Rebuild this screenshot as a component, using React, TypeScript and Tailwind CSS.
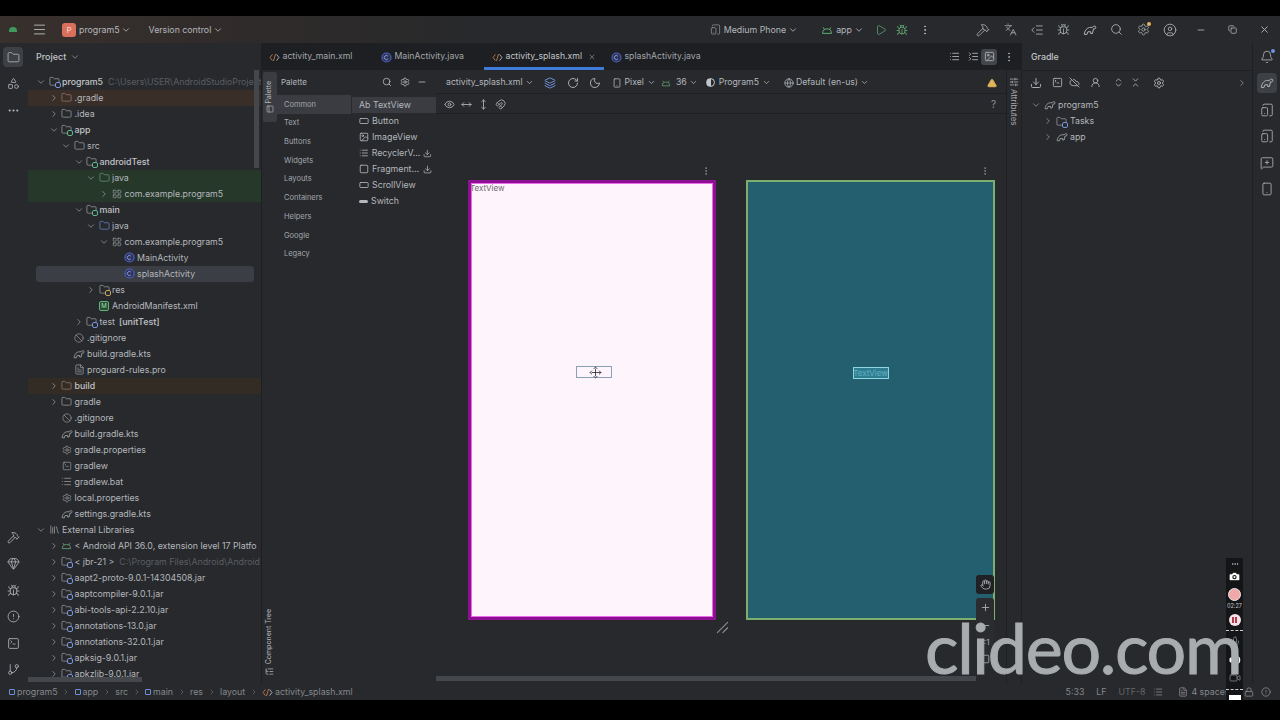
import * as React from "react";
import {
  Ban,
  Bell,
  Bug,
  Camera,
  ChevronDown,
  ChevronRight,
  ChevronsDownUp,
  ChevronsUpDown,
  CircleAlert,
  CircleUser,
  CloudOff,
  Copy,
  Download,
  Ellipsis,
  EllipsisVertical,
  Eye,
  FileText,
  Folder,
  Gem,
  GitBranch,
  Globe,
  Hammer,
  Hand,
  Image,
  Languages,
  Layers,
  LayoutGrid,
  Library,
  List,
  ListCollapse,
  ListIndentDecrease,
  ListTree,
  Lock,
  Magnet,
  Menu,
  MessageSquarePlus,
  Mic,
  Minus,
  Moon,
  Move,
  MoveHorizontal,
  MoveVertical,
  PanelLeft,
  Play,
  Plus,
  RectangleHorizontal,
  RotateCw,
  Search,
  Settings,
  SlidersHorizontal,
  Smartphone,
  Shapes,
  Square,
  SquareTerminal,
  TabletSmartphone,
  TriangleAlert,
  UserRound,
  Video,
  Volume2,
  X,
} from "lucide-react";

type IconProps = { className?: string };

function GradleIcon({ className }: IconProps) {
  return (
    <svg viewBox="0 0 16 16" fill="none" stroke="currentColor" strokeWidth="1.1" className={className}>
      <path d="M1.5 13 C2 8 5 5 9 5 L11 5 C12 3 15 3 14.6 5.4 C14.3 7 12.6 7 12 6.6 L10.8 12 L8.8 12 L8.8 10 L5.6 10 L4.6 13 Z" />
    </svg>
  );
}

function AndroidIcon({ className }: IconProps) {
  return (
    <svg viewBox="0 0 16 16" fill="none" stroke="currentColor" strokeWidth="1.3" className={className}>
      <path d="M2 12.5 C2 8.5 4.5 6.5 8 6.5 C11.5 6.5 14 8.5 14 12.5 Z" />
      <path d="M4.5 7.5 L3 4.5 M11.5 7.5 L13 4.5" />
    </svg>
  );
}

function ClassIcon({ className }: IconProps) {
  return (
    <svg viewBox="0 0 16 16" fill="none" className={className}>
      <circle cx="8" cy="8" r="6.6" stroke="#4f63c4" strokeWidth="1.6" fill="#2d3357" />
      <path d="M10.2 6.2 A3 3 0 1 0 10.2 9.8" stroke="#9aa6e6" strokeWidth="1.3" />
    </svg>
  );
}

function CodeIcon() {
  return (
    <svg viewBox="0 0 16 16" fill="none" strokeWidth="1.4" className="size-[11px]">
      <path d="M5 3.5 L1.5 8 L5 12.5" stroke="#b5764c" />
      <path d="M9.5 3 L6.5 13" stroke="#b5764c" />
      <path d="M11 3.5 L14.5 8 L11 12.5" stroke="#a9acb0" />
    </svg>
  );
}

function ModuleFolder({ badge }: { badge: string }) {
  return (
    <span className="relative block size-[11px]">
      <Folder className="size-[11px] text-[#a4a7ac]" strokeWidth={1.5} />
      <span className={`absolute -right-px -bottom-px size-[6px] rounded-[2px] border ${badge} bg-[#27292c]`} />
    </span>
  );
}

type TreeItem = {
  d: number;
  name: string;
  chev?: "open" | "closed";
  icon?: React.ReactNode;
  bold?: boolean;
  hl?: string;
  sel?: boolean;
  dim?: string;
  extra?: string;
};

const plainFolder = <Folder className="size-[11px] text-[#a4a7ac]" strokeWidth={1.5} />;
const brownFolder = <Folder className="size-[11px] text-[#a37f70]" strokeWidth={1.5} />;
const greenFolder = <Folder className="size-[11px] text-[#6f9c7f]" strokeWidth={1.5} />;
const blueFolder = <Folder className="size-[11px] text-[#6f8fd8]" strokeWidth={1.5} />;
const pkg = <LayoutGrid className="size-[10px] text-[#a4a7ac]" strokeWidth={1.5} />;
const ignoreIcon = <Ban className="size-[10px] text-[#a4a7ac]" strokeWidth={1.5} />;
const gradleFile = <GradleIcon className="size-[12px] text-[#a4a7ac]" />;
const settingsFile = <Settings className="size-[10px] text-[#a4a7ac]" strokeWidth={1.5} />;
const textFile = <List className="size-[11px] text-[#a4a7ac]" strokeWidth={1.5} />;
const jar = <ModuleFolder badge="border-[#7c93d8]" />;

const tree: TreeItem[] = [
  { d: 0, name: "program5", chev: "open", icon: <ModuleFolder badge="border-[#7c93d8]" />, bold: true, dim: "C:\\Users\\USER\\AndroidStudioProject" },
  { d: 1, name: ".gradle", chev: "closed", icon: brownFolder, hl: "bg-[#3a2f28]" },
  { d: 1, name: ".idea", chev: "closed", icon: plainFolder },
  { d: 1, name: "app", chev: "open", icon: <ModuleFolder badge="border-[#5fb88a]" />, bold: true },
  { d: 2, name: "src", chev: "open", icon: plainFolder },
  { d: 3, name: "androidTest", chev: "open", icon: <ModuleFolder badge="border-[#5fb88a]" />, bold: true },
  { d: 4, name: "java", chev: "open", icon: greenFolder, hl: "bg-[#25382a]" },
  { d: 5, name: "com.example.program5", chev: "closed", icon: pkg, hl: "bg-[#25382a]" },
  { d: 3, name: "main", chev: "open", icon: <ModuleFolder badge="border-[#5fb88a]" />, bold: true },
  { d: 4, name: "java", chev: "open", icon: blueFolder },
  { d: 5, name: "com.example.program5", chev: "open", icon: pkg },
  { d: 6, name: "MainActivity", icon: <ClassIcon className="size-[11px]" /> },
  { d: 6, name: "splashActivity", icon: <ClassIcon className="size-[11px]" />, sel: true },
  { d: 4, name: "res", chev: "closed", icon: <ModuleFolder badge="border-[#c9a45c]" /> },
  { d: 4, name: "AndroidManifest.xml", icon: <span className="flex size-[10px] items-center justify-center rounded-[2px] border border-[#62b47a] bg-[#2c4a35] text-[6px] leading-none text-[#9be0ae]">M</span> },
  { d: 3, name: "test", chev: "closed", icon: <ModuleFolder badge="border-[#7c93d8]" />, extra: "[unitTest]" },
  { d: 2, name: ".gitignore", icon: ignoreIcon },
  { d: 2, name: "build.gradle.kts", icon: gradleFile },
  { d: 2, name: "proguard-rules.pro", icon: <FileText className="size-[11px] text-[#a4a7ac]" strokeWidth={1.5} /> },
  { d: 1, name: "build", chev: "closed", icon: brownFolder, hl: "bg-[#332c24]", bold: true },
  { d: 1, name: "gradle", chev: "closed", icon: plainFolder },
  { d: 1, name: ".gitignore", icon: ignoreIcon },
  { d: 1, name: "build.gradle.kts", icon: gradleFile },
  { d: 1, name: "gradle.properties", icon: settingsFile },
  { d: 1, name: "gradlew", icon: <SquareTerminal className="size-[10px] text-[#a4a7ac]" strokeWidth={1.5} /> },
  { d: 1, name: "gradlew.bat", icon: textFile },
  { d: 1, name: "local.properties", icon: settingsFile },
  { d: 1, name: "settings.gradle.kts", icon: gradleFile },
  { d: 0, name: "External Libraries", chev: "open", icon: <Library className="size-[11px] text-[#a4a7ac]" strokeWidth={1.5} /> },
  { d: 1, name: "< Android API 36.0, extension level 17 Platfo", chev: "closed", icon: <AndroidIcon className="size-[11px] text-[#5f9c72]" /> },
  { d: 1, name: "< jbr-21 >", chev: "closed", icon: jar, dim: "C:\\Program Files\\Android\\Android" },
  { d: 1, name: "aapt2-proto-9.0.1-14304508.jar", chev: "closed", icon: jar },
  { d: 1, name: "aaptcompiler-9.0.1.jar", chev: "closed", icon: jar },
  { d: 1, name: "abi-tools-api-2.2.10.jar", chev: "closed", icon: jar },
  { d: 1, name: "annotations-13.0.jar", chev: "closed", icon: jar },
  { d: 1, name: "annotations-32.0.1.jar", chev: "closed", icon: jar },
  { d: 1, name: "apksig-9.0.1.jar", chev: "closed", icon: jar },
  { d: 1, name: "apkzlib-9.0.1.jar", chev: "closed", icon: jar },
];

function TreeRow({ item }: { item: TreeItem }) {
  const left = (item.sel ? 0 : 8) + 12.5 * item.d;
  return (
    <div
      className={`flex h-4 shrink-0 items-center overflow-hidden whitespace-nowrap text-[8.8px] text-[#b4b7bc] ${item.hl ?? ""} ${
        item.sel ? "ml-2 mr-[7px] rounded-[3px] bg-[#3b3e44]" : ""
      }`}
      style={{ paddingLeft: left }}
    >
      <span className="flex w-[10px] shrink-0 justify-center text-[#8d9095]">
        {item.chev === "open" && <ChevronDown className="size-[10px]" />}
        {item.chev === "closed" && <ChevronRight className="size-[10px]" />}
      </span>
      <span className="flex w-[16px] shrink-0 justify-center">{item.icon}</span>
      <span className={item.bold ? "font-medium text-[#c2c5c9]" : ""}>{item.name}</span>
      {item.extra && <span className="ml-1 font-semibold">{item.extra}</span>}
      {item.dim && <span className="ml-[5px] text-[#5a5d62]">{item.dim}</span>}
    </div>
  );
}

const categories = ["Common", "Text", "Buttons", "Widgets", "Layouts", "Containers", "Helpers", "Google", "Legacy"];

function ToolButton({ children }: { children: React.ReactNode }) {
  return <span className="flex w-[26.7px] shrink-0 justify-center">{children}</span>;
}

function WindowButton({ children }: { children: React.ReactNode }) {
  return <span className="flex w-[31.5px] shrink-0 justify-center">{children}</span>;
}

function TitleBar() {
  return (
    <div className="flex h-[27px] shrink-0 items-center whitespace-nowrap bg-linear-to-r from-[#38302d] via-[#2f2b2a] via-20% to-[#27292c] to-40% text-[8.8px] text-[#b4b7bc]">
      <span className="ml-[9px] h-[5px] w-[8px] shrink-0 rounded-t-full bg-[#3f9b5c]" />
      <Menu className="ml-[14.5px] size-[15px] shrink-0 text-[#b4b7bc]" strokeWidth={1.5} />
      <span className="ml-[15.5px] flex size-[14px] shrink-0 items-center justify-center rounded-[3px] bg-[#d9705c] text-[8px] text-[#f6d5cc]">P</span>
      <span className="ml-[3px]">program5</span>
      <ChevronDown className="ml-[1px] size-[10px] shrink-0" />
      <span className="ml-[18px]">Version control</span>
      <ChevronDown className="ml-[2px] size-[10px] shrink-0" />
      <TabletSmartphone className="ml-[487px] size-[11px] shrink-0 text-[#9a9da2]" strokeWidth={1.5} />
      <span className="ml-[2.5px]">Medium Phone</span>
      <ChevronDown className="ml-[2px] size-[10px] shrink-0" />
      <AndroidIcon className="ml-[23px] size-[12px] shrink-0 text-[#5fb06f]" />
      <span className="ml-[3px]">app</span>
      <ChevronDown className="ml-[2px] size-[10px] shrink-0" />
      <Play className="ml-[11px] size-[12px] shrink-0 text-[#5fa572]" strokeWidth={1.5} />
      <Bug className="ml-[9px] size-[12px] shrink-0 text-[#5fa572]" strokeWidth={1.8} />
      <EllipsisVertical className="ml-[11px] size-[12px] shrink-0" />
      <span className="ml-auto flex items-center">
        <ToolButton><Hammer className="size-[14px]" strokeWidth={1.4} /></ToolButton>
        <ToolButton><Languages className="size-[13px]" strokeWidth={1.4} /></ToolButton>
        <ToolButton><ListIndentDecrease className="size-[14px]" strokeWidth={1.4} /></ToolButton>
        <ToolButton><Bug className="size-[13px]" strokeWidth={1.4} /></ToolButton>
        <ToolButton><GradleIcon className="size-[14px]" /></ToolButton>
        <ToolButton><Search className="size-[13px]" strokeWidth={1.5} /></ToolButton>
        <ToolButton>
          <span className="relative">
            <Settings className="size-[13px]" strokeWidth={1.4} />
            <span className="absolute -top-px -right-px size-[4px] rounded-full bg-[#e2b45c]" />
          </span>
        </ToolButton>
        <ToolButton><CircleUser className="size-[14px]" strokeWidth={1.4} /></ToolButton>
        <span className="w-[2px]" />
        <WindowButton><Minus className="size-[10px]" /></WindowButton>
        <WindowButton><Copy className="size-[9px]" /></WindowButton>
        <WindowButton><X className="size-[11px]" /></WindowButton>
      </span>
    </div>
  );
}

function LeftStrip() {
  return (
    <div className="flex w-[26px] shrink-0 flex-col items-center pt-1 text-[#b4b7bc]">
      <span className="flex h-[20px] w-[20px] items-center justify-center rounded-[4px] bg-[#3d4045]">
        <Folder className="size-[13px]" strokeWidth={1.5} />
      </span>
      <Shapes className="mt-[9.5px] size-[13px]" strokeWidth={1.5} />
      <Ellipsis className="mt-[14px] size-[13px]" />
      <div className="mt-auto mb-[8px] flex flex-col items-center gap-[13.4px]">
        <Hammer className="size-[13px]" strokeWidth={1.5} />
        <Gem className="size-[13px]" strokeWidth={1.5} />
        <Bug className="size-[13px]" strokeWidth={1.5} />
        <CircleAlert className="size-[13px]" strokeWidth={1.5} />
        <SquareTerminal className="size-[13px]" strokeWidth={1.5} />
        <GitBranch className="size-[13px]" strokeWidth={1.5} />
      </div>
    </div>
  );
}

function ProjectPanel() {
  return (
    <div className="relative flex w-[236px] shrink-0 flex-col overflow-hidden border-r border-[#1e1f22]">
      <div className="flex h-[27px] shrink-0 items-center pl-[10px] text-[9px] font-medium text-[#c2c5c9]">
        Project
        <ChevronDown className="ml-1 size-[10px] text-[#8d9095]" />
      </div>
      <div className="ml-[2px] mt-[3px] flex flex-col overflow-hidden pt-[0.5px]">
        {tree.map((item, i) => (
          <TreeRow key={i} item={item} />
        ))}
      </div>
      <span className="absolute top-[27px] right-[2px] h-[98px] w-[5px] bg-[#44474b]" />
      <span className="absolute bottom-[2px] left-[2px] h-[5px] w-[114px] bg-[#44474b]" />
    </div>
  );
}

function Tab({ icon, label, active, className }: { icon: React.ReactNode; label: string; active?: boolean; className: string }) {
  return (
    <div className={`relative flex h-full shrink-0 items-center gap-[3px] whitespace-nowrap pt-[1px] text-[8.7px] text-[#a4a7ac] ${className}`}>
      {icon}
      <span className={active ? "text-[#c2c5c9]" : ""}>{label}</span>
      {active && <X className="ml-auto mr-[8px] size-[8px] text-[#8d9095]" />}
      {active && <span className="absolute inset-x-0 bottom-0 h-[3px] bg-[#3f7bd9]" />}
    </div>
  );
}

function EditorTabs() {
  return (
    <div className="flex h-[27px] shrink-0 items-center bg-[#1d1f22]">
      <div className="flex h-full items-center">
        <Tab className="w-[116px] pl-[6.5px]" icon={<CodeIcon />} label="activity_main.xml" />
        <Tab className="w-[106px] pl-[2.5px]" icon={<ClassIcon className="size-[11px]" />} label="MainActivity.java" />
        <Tab className="w-[120px] pl-[7.5px]" icon={<CodeIcon />} label="activity_splash.xml" active />
        <Tab className="w-[110px] pl-[6.5px]" icon={<ClassIcon className="size-[11px]" />} label="splashActivity.java" />
      </div>
      <div className="ml-auto mr-[7px] flex items-center text-[#a9acb0]">
        <List className="size-[11px]" />
        <ListCollapse className="ml-[8px] size-[11px]" />
        <span className="ml-[2px] flex size-[16px] items-center justify-center rounded-[3px] bg-[#43464b]">
          <Image className="size-[11px]" />
        </span>
        <EllipsisVertical className="ml-[6px] size-[12px]" />
      </div>
    </div>
  );
}

function PalettePanel() {
  return (
    <div className="flex w-[174px] shrink-0">
      <div className="flex w-[15px] shrink-0 flex-col items-center justify-between pb-[8px] pt-[2px] text-[7px] text-[#b4b7bc]">
        <span className="flex h-[50px] w-[14px] flex-col items-center justify-center gap-[2px] rounded-[2px] bg-[#3a3c41]">
          <span className="rotate-180 [writing-mode:vertical-rl]">Palette</span>
          <PanelLeft className="size-[8px]" />
        </span>
        <span className="flex flex-col items-center gap-[3px]">
          <span className="rotate-180 whitespace-nowrap [writing-mode:vertical-rl]">Component Tree</span>
          <ListTree className="size-[9px]" />
        </span>
      </div>
      <div className="flex min-w-0 flex-1 flex-col">
        <div className="flex h-[24px] items-center pl-[4px] pr-[9px] text-[8px] text-[#b4b7bc]">
          Palette
          <Search className="ml-auto size-[10px]" />
          <Settings className="ml-[8px] size-[10px]" />
          <Minus className="ml-[7px] size-[10px]" />
        </div>
        <div className="flex">
          <div className="flex w-[74px] flex-col pt-[1px] text-[7.5px] text-[#a4a7ac]">
            {categories.map((c, i) => (
              <div key={c} className={`flex h-[18.7px] items-center pl-[7px] ${i === 0 ? "bg-[#3a3c41]" : ""}`}>
                {c}
              </div>
            ))}
          </div>
          <div className="ml-px flex min-w-0 flex-1 flex-col pt-[3px] text-[8.8px] text-[#b4b7bc]">
            <div className="flex h-4 items-center bg-[#3a3c41] pl-[7px]">Ab TextView</div>
            <PaletteItem icon={<RectangleHorizontal className="size-[10px]" />} label="Button" />
            <PaletteItem icon={<Image className="size-[10px]" />} label="ImageView" />
            <PaletteItem icon={<List className="size-[10px]" />} label="RecyclerV..." dl />
            <PaletteItem icon={<Square className="size-[10px]" />} label="Fragment..." dl />
            <PaletteItem icon={<RectangleHorizontal className="size-[10px]" />} label="ScrollView" />
            <PaletteItem icon={<span className="block h-[3px] w-[9px] rounded-full bg-[#b4b7bc]" />} label="Switch" />
          </div>
        </div>
      </div>
    </div>
  );
}

function PaletteItem({ icon, label, dl }: { icon: React.ReactNode; label: string; dl?: boolean }) {
  return (
    <div className="flex h-4 items-center gap-[3px] pl-[7px]">
      {icon}
      <span>{label}</span>
      {dl && <Download className="ml-auto mr-[4px] size-[9px]" />}
    </div>
  );
}

function DesignArea() {
  return (
    <div className="flex min-w-0 flex-1 flex-col">
      <div className="flex h-[24px] shrink-0 items-center whitespace-nowrap border-b border-[#1f2023] pl-[10px] pr-[9px] pt-[2px] text-[8.7px] text-[#b4b7bc]">
        activity_splash.xml
        <ChevronDown className="ml-[2px] size-[9px]" />
        <Layers className="ml-[10px] size-[12px] text-[#6f8fd8]" />
        <RotateCw className="ml-[11px] size-[12px] text-[#a9acb0]" />
        <Moon className="ml-[10px] size-[12px] text-[#a9acb0]" />
        <Smartphone className="ml-[11px] size-[10px] text-[#a9acb0]" />
        <span className="ml-[3px]">Pixel</span>
        <ChevronDown className="ml-[3px] size-[9px]" />
        <AndroidIcon className="ml-[5px] size-[10px] text-[#5f9c72]" />
        <span className="ml-[5px]">36</span>
        <ChevronDown className="ml-[2px] size-[9px]" />
        <span className="ml-[8.5px] size-[9px] rounded-full border border-[#c2c5c9] bg-linear-to-r from-[#c2c5c9] from-50% to-transparent to-50%" />
        <span className="ml-[3.5px]">Program5</span>
        <ChevronDown className="ml-[3px] size-[9px]" />
        <Globe className="ml-[13px] size-[10px] text-[#a9acb0]" />
        <span className="ml-[2px]">Default (en-us)</span>
        <ChevronDown className="ml-[2px] size-[9px]" />
        <TriangleAlert className="ml-auto size-[10px] fill-[#e2b45c] text-[#e2b45c]" />
      </div>
      <div className="flex h-[20px] shrink-0 items-center gap-[6px] border-b border-[#1f2023] pl-[8px] pr-[10px] pt-[2px] text-[#a9acb0]">
        <Eye className="size-[11px]" />
        <MoveHorizontal className="size-[11px]" />
        <MoveVertical className="size-[11px]" />
        <Magnet className="size-[11px]" />
        <span className="ml-auto text-[10px] text-[#8d9095]">?</span>
      </div>
      <div className="relative flex h-[562px] shrink-0 items-start gap-[30px] pl-[32px] pt-[52px]">
        <div className="relative flex w-[248px] flex-col">
          <div className="flex h-[14px] justify-end pr-[5px] text-[#8d9095]">
            <EllipsisVertical className="size-[10px]" />
          </div>
          <div className="flex h-[440px] flex-col items-center border-[3px] border-[#8e0f94] bg-[#fdf4fc] pt-[173px] shadow-[inset_0_0_0_1px_#ea6cea]">
            <span className="-mt-[173px] mb-[173px] -ml-[1px] self-start text-[8px] leading-[10px] text-[#6d6a70]">TextView</span>
            <div className="relative ml-[3px] h-[12px] w-[36px] border border-[#8a9fb8]">
              <span className="absolute left-[12px] top-[-1px] flex size-[13px] items-center justify-center">
                <Move className="size-[13px] fill-white text-[#333]" strokeWidth={1.6} />
              </span>
            </div>
          </div>
          <svg viewBox="0 0 12 12" className="absolute -right-[13px] -bottom-[14px] size-[13px] text-[#8d9095]" fill="none" stroke="currentColor" strokeWidth="1">
            <path d="M1 11 L11 1 M6 11 L11 6" />
          </svg>
        </div>
        <div className="flex w-[249px] flex-col">
          <div className="flex h-[14px] justify-end pr-[5px] text-[#8d9095]">
            <EllipsisVertical className="size-[10px]" />
          </div>
          <div className="flex h-[440px] flex-col items-center border-2 border-[#7cae6c] bg-[#235f6e] pt-[185px]">
            <div className="flex h-[12px] w-[36px] items-center justify-center overflow-hidden whitespace-nowrap border border-[#8fd6e4] bg-[#2f7e90] text-[8px] leading-none text-[#63aec0]">
              TextView
            </div>
          </div>
        </div>
        <div className="absolute left-[540px] top-[461px] flex w-[18px] flex-col items-center text-[#a9acb0]">
          <span className="flex h-[19px] w-full items-center justify-center rounded-[3px] bg-[#1f2124]">
            <Hand className="size-[11px]" />
          </span>
          <div className="mt-[4px] flex w-full flex-col items-center rounded-[3px] bg-[#2a2c30] pt-[3.5px] text-[8px] leading-[10px]">
            <Plus className="size-[11px]" />
            <Minus className="mt-[7px] size-[11px]" />
            <span className="mt-[6.5px]">1:1</span>
            <Square className="mt-[7px] size-[10px]" />
          </div>
        </div>
      </div>
      <span className="h-[5px] w-[540px] shrink-0 bg-[#44474b]" />
    </div>
  );
}

function AttributesStrip() {
  return (
    <div className="flex w-[16px] shrink-0 flex-col items-center border-x border-[#1f2023] pt-[7px] text-[#a9acb0]">
      <SlidersHorizontal className="size-[10px]" />
      <span className="mt-[2px] text-[8px] [writing-mode:vertical-rl]">Attributes</span>
    </div>
  );
}

function GradlePanel() {
  return (
    <div className="flex w-[230px] shrink-0 flex-col text-[8.8px] text-[#b4b7bc]">
      <div className="flex h-[27px] shrink-0 items-center pl-[9px] font-medium text-[#c2c5c9]">Gradle</div>
      <div className="flex h-[24px] items-center border-t border-[#1f2023] pl-[8px] text-[#a9acb0]">
        <Download className="size-[12px]" />
        <SquareTerminal className="ml-[10px] size-[11px]" />
        <CloudOff className="ml-[6px] size-[11px]" />
        <UserRound className="ml-[10px] size-[11px]" />
        <ChevronsUpDown className="ml-[12px] size-[11px]" />
        <ChevronsDownUp className="ml-[6px] size-[11px]" />
        <Settings className="ml-[12px] size-[12px]" />
        <ChevronRight className="ml-auto mr-[5px] size-[10px] text-[#8d9095]" />
      </div>
      <div className="mt-[3px] flex h-4 items-center pl-[9px]">
        <ChevronDown className="size-[10px] text-[#8d9095]" />
        <GradleIcon className="ml-[3px] size-[12px] text-[#a9acb0]" />
        <span className="ml-[2px]">program5</span>
      </div>
      <div className="flex h-4 items-center pl-[21px]">
        <ChevronRight className="size-[10px] text-[#8d9095]" />
        <span className="ml-[3px]"><ModuleFolder badge="border-[#7c93d8]" /></span>
        <span className="ml-[3px]">Tasks</span>
      </div>
      <div className="flex h-4 items-center pl-[21px]">
        <ChevronRight className="size-[10px] text-[#8d9095]" />
        <GradleIcon className="ml-[3px] size-[12px] text-[#a9acb0]" />
        <span className="ml-[2px]">app</span>
      </div>
    </div>
  );
}

function RightStrip() {
  return (
    <div className="flex w-[28px] shrink-0 flex-col items-center border-l border-[#1f2023] pt-[7px] text-[#b4b7bc]">
      <span className="relative">
        <Bell className="size-[14px]" strokeWidth={1.4} />
        <span className="absolute -top-px -right-px size-[4px] rounded-full bg-[#6f8fe8]" />
      </span>
      <span className="mt-[9px] flex size-[20px] items-center justify-center rounded-[4px] bg-[#3d4045]">
        <GradleIcon className="size-[14px]" />
      </span>
      <TabletSmartphone className="mt-[10px] size-[14px]" strokeWidth={1.4} />
      <TabletSmartphone className="mt-[12px] size-[14px]" strokeWidth={1.4} />
      <MessageSquarePlus className="mt-[13px] size-[14px]" strokeWidth={1.4} />
      <Smartphone className="mt-[12px] size-[14px]" strokeWidth={1.4} />
    </div>
  );
}

function StatusBar() {
  const sep = <ChevronRight className="mx-[4.5px] size-[8px] text-[#6e7175]" />;
  return (
    <div className="flex h-4 shrink-0 items-center whitespace-nowrap pl-[9px] text-[8.8px] text-[#85888d]">
      <span className="size-[6px] rounded-[1px] border border-[#6f8fd8]" />
      <span className="ml-[2px]">program5</span>
      {sep}
      <span className="size-[6px] rounded-[1px] border border-[#6f8fd8]" />
      <span className="ml-[2px]">app</span>
      {sep}
      <span>src</span>
      {sep}
      <span className="size-[6px] rounded-[1px] border border-[#6f8fd8]" />
      <span className="ml-[2px]">main</span>
      {sep}
      <span>res</span>
      {sep}
      <span>layout</span>
      {sep}
      <CodeIcon />
      <span className="ml-[2px]">activity_splash.xml</span>
      <span className="ml-[713px]">5:33</span>
      <span className="ml-[12px]">LF</span>
      <span className="ml-[12px] text-[#63666a]">UTF-8</span>
      <List className="ml-[8px] size-[10px]" />
      <FileText className="ml-[15px] size-[10px]" />
      <span className="ml-[3px]">4 spaces</span>
      <Lock className="ml-[15px] size-[10px]" />
      <CircleAlert className="ml-[7px] size-[10px]" />
    </div>
  );
}

function Recorder() {
  return (
    <div className="absolute left-[1226px] top-[558px] flex h-[142px] w-[17px] flex-col items-center overflow-hidden bg-[#141517] pt-[2px] text-[#c9ccd0]">
      <Ellipsis className="size-[8px] shrink-0" />
      <Camera className="mt-[1.5px] size-[13px] shrink-0 fill-white text-[#141517]" />
      <span className="mt-[5px] size-[13px] shrink-0 rounded-full border border-[#e8e8e8] bg-[#f0a8a8]" />
      <span className="mt-[1.5px] text-[5.5px] leading-[8px]">02:27</span>
      <span className="mt-[4px] flex size-[12px] shrink-0 items-center justify-center gap-px rounded-full bg-[#f3e3e6]">
        <span className="h-[6px] w-[2px] bg-[#b23a4e]" />
        <span className="h-[6px] w-[2px] bg-[#b23a4e]" />
      </span>
      <span className="mt-[4px] w-full shrink-0 border-t border-dashed border-[#c9ccd0]" />
      <Mic className="mt-[5px] size-[12px] shrink-0 text-[#6e7175]" />
      <Volume2 className="mt-[6px] size-[12px] shrink-0 fill-white text-white" />
      <Video className="mt-[6px] size-[12px] shrink-0 text-[#6e7175]" />
      <span className="mt-[5px] w-full shrink-0 border-t border-dashed border-[#c9ccd0]" />
      <span className="mt-[5px] h-[10px] w-[12px] shrink-0 bg-white" />
    </div>
  );
}

export default function App() {
  return (
    <div className="relative flex h-[720px] w-[1280px] flex-col overflow-hidden bg-black [font-family:Inter,sans-serif]">
      <div className="h-4 shrink-0 bg-black" />
      <div className="flex h-[684px] shrink-0 flex-col bg-[#27292c]">
        <TitleBar />
        <div className="flex h-[641px] shrink-0">
          <LeftStrip />
          <ProjectPanel />
          <div className="flex w-[760px] shrink-0 flex-col">
            <EditorTabs />
            <div className="flex min-h-0 flex-1">
              <PalettePanel />
              <DesignArea />
              <AttributesStrip />
            </div>
          </div>
          <GradlePanel />
          <RightStrip />
        </div>
        <StatusBar />
      </div>
      <div className="flex-1 bg-black" />
      <Recorder />
      <span className="absolute left-[925px] top-[604px] text-[70px] leading-[86px] tracking-[-1.3px] text-[#a8acae] [-webkit-text-stroke:1px_#a8acae] [font-family:Lato,sans-serif]">
        clideo.com
      </span>
    </div>
  );
}
